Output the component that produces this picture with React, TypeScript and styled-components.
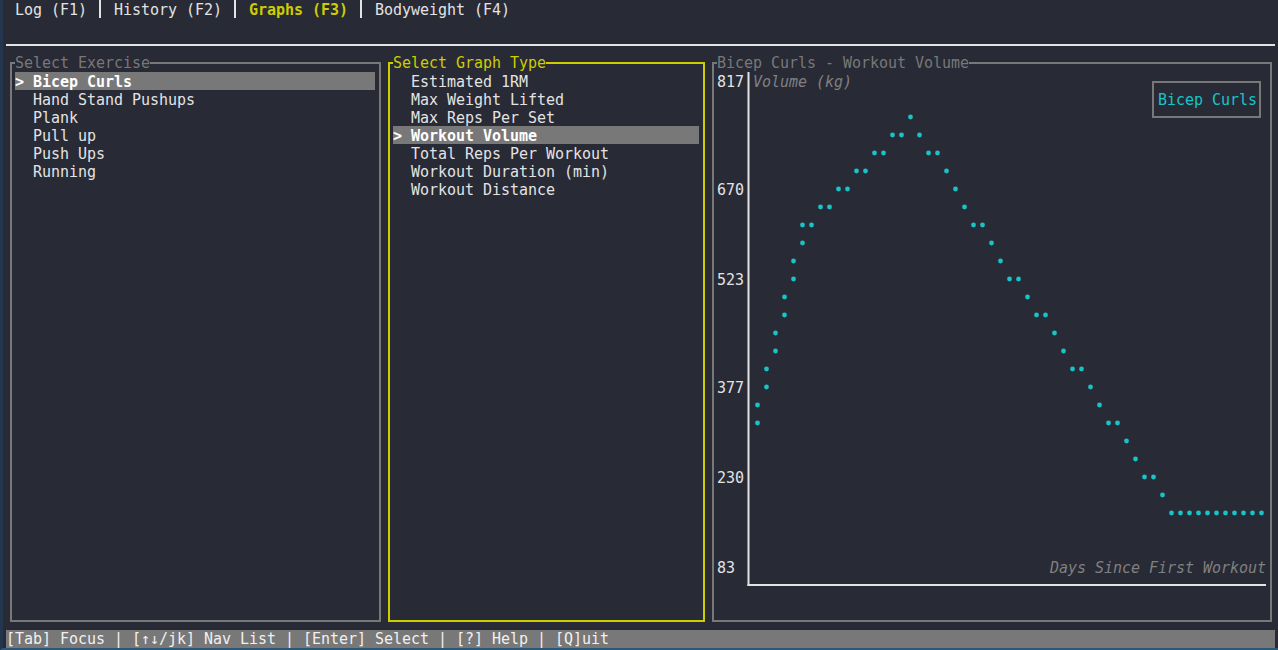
import React from "react";
import styled, { createGlobalStyle, css } from "styled-components";

const BG = "#282a36";
const FG = "#e3e3e3";
const GRAY = "#787878";
const YELLOW = "#cdcd00";
const CYAN = "#17c4c8";

const Global = createGlobalStyle`
  html, body { margin: 0; padding: 0; background: ${BG}; }
  body {
    font-family: "DejaVu Sans Mono", "Liberation Mono", monospace;
    font-size: 15px;
    line-height: 18px;
    letter-spacing: -0.03px;
    color: ${FG};
  }
  * { box-sizing: border-box; }
`;

const Screen = styled.div`
  width: 1278px;
  height: 650px;
  border-left: 3px solid #23364e;
  border-bottom: 2px solid #2b5778;
  padding-left: 3px;
  overflow: hidden;
  background: ${BG};
`;

const Terminal = styled.div`
  width: 1269px;
  display: flex;
  flex-direction: column;
`;

const TopBar = styled.header`
  flex: none;
  height: 46px;
  border-bottom: 2px solid ${FG};
  margin-bottom: 8px;
`;

const Tabs = styled.nav`
  display: flex;
  height: 18px;
  padding-left: 9px;
  white-space: pre;
`;

const Tab = styled.span<{ $active?: boolean }>`
  padding-top: 1px;
  color: ${(p) => (p.$active ? YELLOW : FG)};
  font-weight: ${(p) => (p.$active ? 700 : 400)};
`;

const TabSep = styled.span`
  position: relative;
  width: 27px;
  height: 18px;
  &::before {
    content: "";
    position: absolute;
    left: 12px;
    top: 0;
    width: 2px;
    height: 18px;
    background: ${FG};
  }
`;

const Main = styled.main`
  flex: none;
  display: grid;
  grid-template-columns: 378px 324px 567px;
  height: 576px;
`;

const Panel = styled.section`
  height: 576px;
  padding: 8px 3px 8px 4px;
`;

const Frame = styled.div<{ $color: string }>`
  position: relative;
  height: 100%;
  border: 2px solid ${(p) => p.$color};
  padding: 8px 4px 0 3px;
`;

const Title = styled.span<{ $color: string }>`
  position: absolute;
  top: -10px;
  left: 3px;
  height: 18px;
  padding-top: 1px;
  line-height: 17px;
  background: ${BG};
  color: ${(p) => p.$color};
  white-space: pre;
`;

const List = styled.ul`
  list-style: none;
  margin: 0;
  padding: 0;
`;

const Item = styled.li<{ $selected?: boolean }>`
  height: 18px;
  padding-top: 1px;
  white-space: pre;
  color: ${FG};
  ${(p) =>
    p.$selected &&
    css`
      background: ${GRAY};
      color: #ffffff;
      font-weight: 700;
    `}
`;

const ChartArea = styled.div`
  position: relative;
  width: 549px;
  height: 540px;
`;

const YLabel = styled.span<{ $top: number }>`
  position: absolute;
  left: 0;
  top: ${(p) => p.$top}px;
  color: ${FG};
`;

const AxisTitle = styled.span<{ $left: number; $top: number }>`
  position: absolute;
  left: ${(p) => p.$left}px;
  top: ${(p) => p.$top}px;
  color: #808080;
  font-style: italic;
  white-space: pre;
`;

const Plot = styled.svg`
  position: absolute;
  left: 0;
  top: 0;
`;

const Legend = styled.div`
  position: absolute;
  left: 435px;
  top: 9px;
  width: 109px;
  height: 37px;
  border: 2px solid ${GRAY};
  padding: 8px 0 0 4px;
  color: ${CYAN};
  white-space: pre;
`;

const StatusBar = styled.footer`
  flex: none;
  height: 18px;
  padding-top: 1px;
  line-height: 17px;
  background: ${GRAY};
  color: #f0f0f0;
  white-space: pre;
`;

const exercises = [
  "Bicep Curls",
  "Hand Stand Pushups",
  "Plank",
  "Pull up",
  "Push Ups",
  "Running",
];

const graphTypes = [
  "Estimated 1RM",
  "Max Weight Lifted",
  "Max Reps Per Set",
  "Workout Volume",
  "Total Reps Per Workout",
  "Workout Duration (min)",
  "Workout Distance",
];

const yLabels: [string, number][] = [
  ["817", 4],
  ["670", 10],
  ["523", 15],
  ["377", 21],
  ["230", 26],
  ["83", 31],
];

const range = (a: number, b: number) =>
  Array.from({ length: b - a + 1 }, (_, i) => a + i);

const dotRows: [number, number[]][] = [
  [6, [100]],
  [7, [98, 99, 101]],
  [8, [96, 97, 102, 103]],
  [9, [94, 95, 104]],
  [10, [92, 93, 105]],
  [11, [90, 91, 106]],
  [12, [88, 89, 107, 108]],
  [13, [88, 109]],
  [14, [87, 110]],
  [15, [87, 111, 112]],
  [16, [86, 113]],
  [17, [86, 114, 115]],
  [18, [85, 116]],
  [19, [85, 117]],
  [20, [84, 118, 119]],
  [21, [84, 120]],
  [22, [83, 121]],
  [23, [83, 122, 123]],
  [24, [124]],
  [25, [125]],
  [26, [126, 127]],
  [27, [128]],
  [28, range(129, 139)],
];

// chart area origin = terminal col 79 / row 4 (x=717, y=72)
const colX = (c: number) => 9 * c + 10.5 - 717;
const rowY = (r: number) => 18 * r + 9 - 72;

export default function App() {
  return (
    <>
      <Global />
      <Screen>
        <Terminal>
          <TopBar>
            <Tabs>
              <Tab>Log (F1)</Tab>
              <TabSep />
              <Tab>History (F2)</Tab>
              <TabSep />
              <Tab $active>Graphs (F3)</Tab>
              <TabSep />
              <Tab>Bodyweight (F4)</Tab>
            </Tabs>
          </TopBar>
          <Main>
            <Panel>
              <Frame $color={GRAY}>
                <Title $color={GRAY}>Select Exercise</Title>
                <List>
                  {exercises.map((e, i) => (
                    <Item key={e} $selected={i === 0}>
                      {(i === 0 ? "> " : "  ") + e}
                    </Item>
                  ))}
                </List>
              </Frame>
            </Panel>
            <Panel>
              <Frame $color={YELLOW}>
                <Title $color={YELLOW}>Select Graph Type</Title>
                <List>
                  {graphTypes.map((g, i) => (
                    <Item key={g} $selected={i === 3}>
                      {(i === 3 ? "> " : "  ") + g}
                    </Item>
                  ))}
                </List>
              </Frame>
            </Panel>
            <Panel>
              <Frame $color={GRAY}>
                <Title $color={GRAY}>Bicep Curls - Workout Volume</Title>
                <ChartArea>
                  <Plot width={549} height={540} viewBox="0 0 549 540">
                    <line x1={31.5} y1={0} x2={31.5} y2={514} stroke={FG} strokeWidth={2} />
                    <line x1={30.5} y1={513} x2={549} y2={513} stroke={FG} strokeWidth={2} />
                    {dotRows.flatMap(([r, cols]) =>
                      cols.map((c) => (
                        <circle key={`${r}-${c}`} cx={colX(c)} cy={rowY(r)} r={2.4} fill={CYAN} />
                      ))
                    )}
                  </Plot>
                  {yLabels.map(([t, r]) => (
                    <YLabel key={t} $top={18 * r - 71}>
                      {t}
                    </YLabel>
                  ))}
                  <AxisTitle $left={36} $top={1}>Volume (kg)</AxisTitle>
                  <AxisTitle $left={333} $top={487}>Days Since First Workout</AxisTitle>
                  <Legend>Bicep Curls</Legend>
                </ChartArea>
              </Frame>
            </Panel>
          </Main>
          <StatusBar>[Tab] Focus | [↑↓/jk] Nav List | [Enter] Select | [?] Help | [Q]uit</StatusBar>
        </Terminal>
      </Screen>
    </>
  );
}
